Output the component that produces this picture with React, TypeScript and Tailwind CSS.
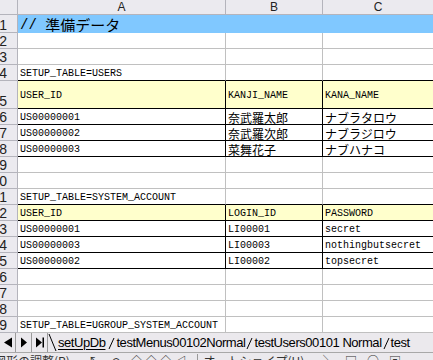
import React from 'react';

type Cell = { t?: React.ReactNode; k?: 'blue' | 'yel'; bb?: boolean; br?: boolean };
type Row = { n: number; h: string; cells: Cell[] };

const JP = ({ children }: { children: React.ReactNode }) => (
  <span className="font-['Noto_Sans_CJK_JP',sans-serif] text-[12px] leading-[12px]">{children}</span>
);

const tbl = (a: React.ReactNode, b: React.ReactNode, c: React.ReactNode, k?: 'yel'): Cell[] => [
  { t: a, k, bb: true, br: true },
  { t: b, k, bb: true, br: true },
  { t: c, k, bb: true, br: false },
];

const empty = (): Cell[] => [{}, {}, {}];

const rows: Row[] = [
  {
    n: 1,
    h: 'h-[18px]',
    cells: [
      {
        t: (
          <span className="flex items-center">
            <span className="font-['Liberation_Mono',monospace] text-[14px]">//&nbsp;</span>
            <span className="font-['Noto_Sans_CJK_JP',sans-serif] text-[15px] leading-[15px]">準備データ</span>
          </span>
        ),
        k: 'blue',
      },
      { k: 'blue' },
      { k: 'blue' },
    ],
  },
  { n: 2, h: 'h-[16px]', cells: empty() },
  { n: 3, h: 'h-[16px]', cells: empty() },
  { n: 4, h: 'h-[16px]', cells: [{ t: 'SETUP_TABLE=USERS', bb: true }, { bb: true }, { bb: true }] },
  { n: 5, h: 'h-[28px]', cells: tbl('USER_ID', 'KANJI_NAME', 'KANA_NAME', 'yel') },
  { n: 6, h: 'h-[16px]', cells: tbl('US00000001', <JP>奈武羅太郎</JP>, <JP>ナブラタロウ</JP>) },
  { n: 7, h: 'h-[16px]', cells: tbl('US00000002', <JP>奈武羅次郎</JP>, <JP>ナブラジロウ</JP>) },
  { n: 8, h: 'h-[16px]', cells: tbl('US00000003', <JP>菜舞花子</JP>, <JP>ナブハナコ</JP>) },
  { n: 9, h: 'h-[16px]', cells: empty() },
  { n: 10, h: 'h-[16px]', cells: empty() },
  { n: 11, h: 'h-[16px]', cells: [{ t: 'SETUP_TABLE=SYSTEM_ACCOUNT', bb: true }, { bb: true }, { bb: true }] },
  { n: 12, h: 'h-[16px]', cells: tbl('USER_ID', 'LOGIN_ID', 'PASSWORD', 'yel') },
  { n: 13, h: 'h-[16px]', cells: tbl('US00000001', 'LI00001', 'secret') },
  { n: 14, h: 'h-[16px]', cells: tbl('US00000003', 'LI00003', 'nothingbutsecret') },
  { n: 15, h: 'h-[16px]', cells: tbl('US00000002', 'LI00002', 'topsecret') },
  { n: 16, h: 'h-[16px]', cells: empty() },
  { n: 17, h: 'h-[16px]', cells: empty() },
  { n: 18, h: 'h-[16px]', cells: empty() },
  { n: 19, h: 'h-[16px]', cells: [{ t: 'SETUP_TABLE=UGROUP_SYSTEM_ACCOUNT' }, {}, {}] },
];

function cellClass(c: Cell, col: number) {
  const p: string[] = [
    "flex items-center whitespace-nowrap overflow-hidden pl-[2px] pt-[2px] border-b font-['Liberation_Mono',monospace] text-[10px] leading-[10px] text-black",
  ];
  if (col < 2) p.push('border-r');
  if (c.k === 'blue') {
    p.push('bg-[#80c8ff] border-r-[#80c8ff] border-b-[#80c8ff]');
  } else {
    p.push(c.k === 'yel' ? 'bg-[#ffffcc]' : 'bg-white');
    p.push(c.br ? 'border-r-black' : 'border-r-[#c0c0c0]');
    p.push(c.bb ? 'border-b-black' : 'border-b-[#c0c0c0]');
  }
  return p.join(' ');
}

const Tri = ({ dir }: { dir: 'l' | 'r' | 'end' }) => (
  <svg width="10" height="11" viewBox="0 0 10 11">
    {dir === 'l' && <polygon points="9,0.5 9,10.5 1,5.5" fill="#000" />}
    {dir === 'r' && <polygon points="2,0.5 2,10.5 8,5.5" fill="#000" />}
    {dir === 'end' && (
      <>
        <polygon points="1,0.5 1,10.5 7,5.5" fill="#000" />
        <rect x="7.5" y="0.5" width="1.5" height="10" fill="#000" />
      </>
    )}
  </svg>
);

const EdgeBack = () => (
  <svg width="9" height="17" viewBox="0 0 9 17" className="shrink-0">
    <line x1="1" y1="0" x2="8" y2="17" stroke="#000" strokeWidth="1" />
  </svg>
);
const EdgeFwd = () => (
  <svg width="7" height="17" viewBox="0 0 7 17" className="shrink-0">
    <line x1="1" y1="15" x2="6" y2="4" stroke="#000" strokeWidth="1" />
  </svg>
);

export default function App() {
  return (
    <div className="w-[433px] h-[360px] overflow-hidden bg-white select-none">
      <div className="grid grid-cols-[18px_208px_97px_1fr]">
        {/* column headers */}
        <div className="h-[15px] bg-[#ebeaef] border-r border-b border-[#b4b4bc]" />
        {['A', 'B', 'C'].map((l, i) => (
          <div
            key={l}
            className={
              i < 2
                ? "h-[15px] bg-[#ebeaef] border-r border-b border-[#b4b4bc] flex items-center justify-center font-['Liberation_Sans',sans-serif] text-[12px] leading-none text-[#222]"
                : "h-[15px] bg-[#ebeaef] border-b border-[#b4b4bc] flex items-center justify-center font-['Liberation_Sans',sans-serif] text-[12px] leading-none text-[#222]"
            }
          >
            {l}
          </div>
        ))}
        {rows.map((r) => (
          <React.Fragment key={r.n}>
            <div
              className={`${r.h} flex items-end justify-end pr-[10px] overflow-hidden bg-[#ebeaef] border-r border-b border-[#b4b4bc] font-['Liberation_Sans',sans-serif] text-[14px] leading-[14px] text-[#222]`}
            >
              <span className="whitespace-nowrap">{r.n}</span>
            </div>
            {r.cells.map((c, i) => (
              <div key={i} className={`${r.h} ${cellClass(c, i)}`}>
                {c.t}
              </div>
            ))}
          </React.Fragment>
        ))}
      </div>

      {/* sheet tabs */}
      <div className="flex h-[19px] items-center bg-[#ebe9ed] font-['Liberation_Sans',sans-serif] text-[13px] leading-none tracking-[-0.45px] text-black whitespace-nowrap">
        <div className="flex h-full shrink-0">
          <div className="w-[16px] h-full flex items-center justify-center border-r border-[#9a9a9a]">
            <Tri dir="l" />
          </div>
          <div className="w-[16px] h-full flex items-center justify-center border-r border-[#9a9a9a]">
            <Tri dir="r" />
          </div>
          <div className="w-[16px] h-full flex items-center justify-center border-r border-[#9a9a9a]">
            <Tri dir="end" />
          </div>
        </div>
        <EdgeBack />
        <span className="ml-[1px] underline underline-offset-[2px]">setUpDb</span>
        <span className="ml-[3px]"><EdgeFwd /></span>
        <span className="ml-[1px]">testMenus00102Normal</span>
        <span className="ml-[1px]"><EdgeFwd /></span>
        <span className="ml-[1px]">testUsers00101 Normal</span>
        <span className="ml-[1px]"><EdgeFwd /></span>
        <span className="ml-[1px]">test</span>
      </div>

      {/* drawing toolbar (cut off) */}
      <div className="h-[8px] overflow-hidden bg-[#ebe9ed] border-t border-[#a8a8a8]">
        <div className="flex items-start gap-[10px] -ml-[6px] pt-[1px] font-['Noto_Sans_CJK_JP',sans-serif] text-[12px] leading-[14px] text-[#333] whitespace-nowrap">
          <span>図形の調整(R) ▾</span>
          <span>↖</span>
          <span>⟲</span>
          <span>◇ ◇ ◇ ◁</span>
          <span className="border-l border-[#999] pl-[6px]">オートシェイプ(U) ▾</span>
          <span>╲</span>
          <span>□</span>
          <span>○</span>
          <span>▣</span>
        </div>
      </div>
    </div>
  );
}
